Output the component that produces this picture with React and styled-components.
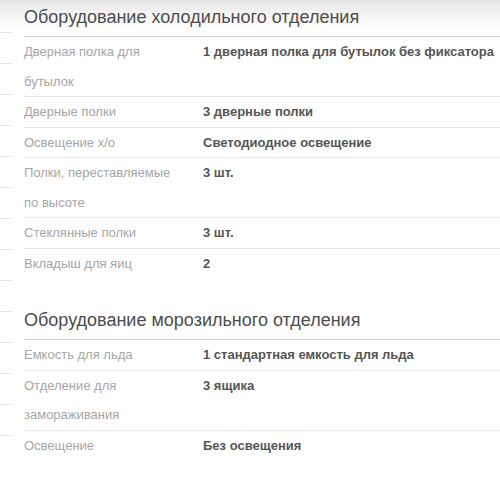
import React from "react";
import styled, { createGlobalStyle } from "styled-components";

// ---------- STYLES ----------
const Global = createGlobalStyle`
  html, body {
    margin: 0;
    padding: 0;
    background: #fff;
  }
  body {
    font-family: "Liberation Sans", Arial, sans-serif;
    overflow: hidden;
  }
`;

const Page = styled.div`
  display: flex;
  gap: 12px;
  width: 500px;
  height: 483px;
  overflow: hidden;
  background: linear-gradient(#e2e2e2 0px, #f3f3f3 12px, #fff 30px);
`;

const SideColumn = styled.div`
  width: 12px;
  flex: none;
  padding-top: 2px;
`;

const SideRow = styled.div`
  height: 30px;
  border-bottom: 1px solid #e6e6e6;
`;

const Main = styled.div`
  flex: 1;
  min-width: 0;
  margin-right: -40px;
`;

const Section = styled.section`
  margin-bottom: 25px;
`;

const Title = styled.h3`
  margin: 0;
  padding: 2px 0 4px;
  font-size: 18px;
  line-height: 30px;
  font-weight: normal;
  color: #4d4d4d;
  border-bottom: 1px solid #cfcfcf;
`;

const Row = styled.div`
  display: grid;
  grid-template-columns: 179px 1fr;
  font-size: 13px;
  line-height: 29.5px;
  border-bottom: ${(p) => (p.last ? "none" : "1px solid #e8e8e8")};
`;

const Label = styled.div`
  color: #a6a6a6;
  padding-right: 20px;
`;

const Value = styled.div`
  color: #555;
  font-weight: bold;
  white-space: nowrap;
`;

// ---------- DATA ----------
const sections = [
  {
    title: "Оборудование холодильного отделения",
    rows: [
      ["Дверная полка для бутылок", "1 дверная полка для бутылок без фиксатора"],
      ["Дверные полки", "3 дверные полки"],
      ["Освещение х/о", "Светодиодное освещение"],
      ["Полки, переставляемые по высоте", "3 шт."],
      ["Стеклянные полки", "3 шт."],
      ["Вкладыш для яиц", "2"],
    ],
  },
  {
    title: "Оборудование морозильного отделения",
    rows: [
      ["Емкость для льда", "1 стандартная емкость для льда"],
      ["Отделение для замораживания", "3 ящика"],
      ["Освещение", "Без освещения"],
    ],
  },
];

// ---------- COMPONENT ----------
function App() {
  return (
    <>
      <Global />
      <Page>
        {/* neighbouring column, cut off at the edge */}
        <SideColumn>
          {Array.from({ length: 14 }).map((_, i) => (
            <SideRow key={i} />
          ))}
        </SideColumn>

        <Main>
          {sections.map((s) => (
            <Section key={s.title}>
              <Title>{s.title}</Title>
              {s.rows.map(([label, value], i) => (
                <Row key={label} last={i === s.rows.length - 1}>
                  <Label>{label}</Label>
                  <Value>{value}</Value>
                </Row>
              ))}
            </Section>
          ))}
        </Main>
      </Page>
    </>
  );
}

export default App;
